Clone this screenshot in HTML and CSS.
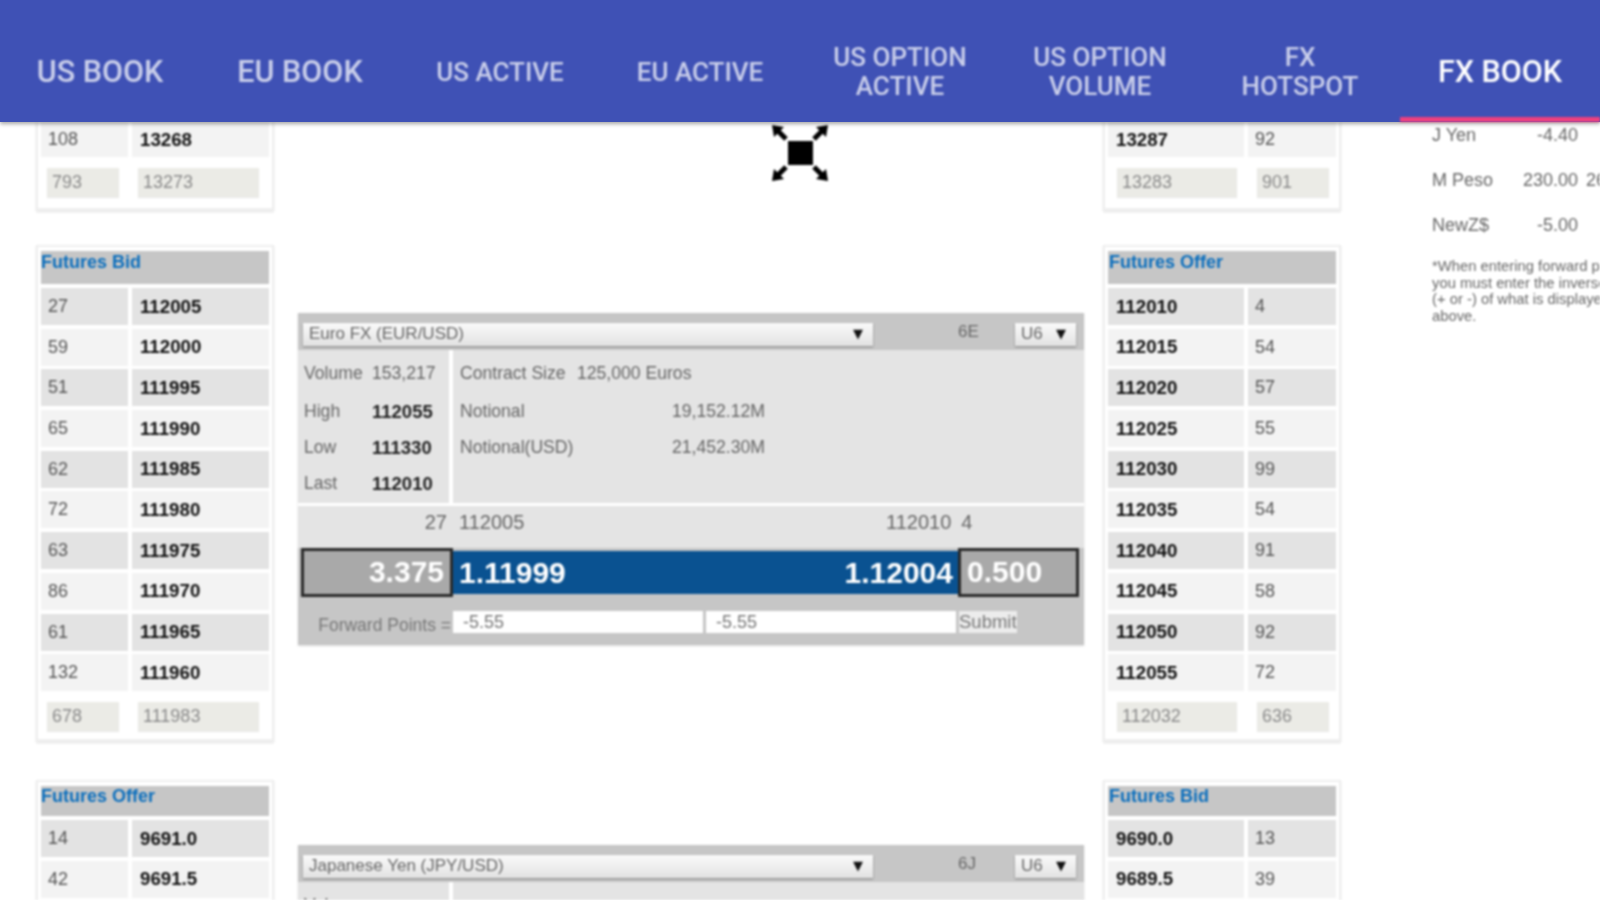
FILE: index.html
```html
<!DOCTYPE html>
<html lang="en">
<head>
<meta charset="utf-8">
<title>FX Book</title>
<link rel="stylesheet" href="styles.css">
</head>
<body>
<header class="tabs">
  <div class="tab">US BOOK</div>
  <div class="tab">EU BOOK</div>
  <div class="tab small mid">US ACTIVE</div>
  <div class="tab small mid">EU ACTIVE</div>
  <div class="tab small">US OPTION<br>ACTIVE</div>
  <div class="tab small">US OPTION<br>VOLUME</div>
  <div class="tab small">FX<br>HOTSPOT</div>
  <div class="tab active">FX BOOK</div>
</header>
<main class="page">
  <svg class="fullscreen" viewBox="0 0 58 62" aria-hidden="true">
    <rect x="17" y="19" width="25" height="24"/>
    <path d="M1 3 13 5 3 15Z"/>
    <path d="M57 3 45 5 55 15Z"/>
    <path d="M1 59 13 57 3 47Z"/>
    <path d="M57 59 45 57 55 47Z"/>
    <path class="arrow" d="M7 9 15 17M51 9 43 17M7 53 15 45M51 53 43 45"/>
  </svg>
  <section class="col">
    <div class="card first bid">
      <div class="rows">
        <div class="row light"><span>108</span><b>13268</b></div>
      </div>
      <div class="entry"><span>793</span><span>13273</span></div>
    </div>
    <div class="card bid">
      <h3>Futures Bid</h3>
      <div class="rows">
        <div class="row"><span>27</span><b>112005</b></div>
        <div class="row light"><span>59</span><b>112000</b></div>
        <div class="row"><span>51</span><b>111995</b></div>
        <div class="row light"><span>65</span><b>111990</b></div>
        <div class="row"><span>62</span><b>111985</b></div>
        <div class="row light"><span>72</span><b>111980</b></div>
        <div class="row"><span>63</span><b>111975</b></div>
        <div class="row light"><span>86</span><b>111970</b></div>
        <div class="row"><span>61</span><b>111965</b></div>
        <div class="row light"><span>132</span><b>111960</b></div>
      </div>
      <div class="entry"><span>678</span><span>111983</span></div>
    </div>
    <div class="card bid lower">
      <h3>Futures Offer</h3>
      <div class="rows">
        <div class="row"><span>14</span><b>9691.0</b></div>
        <div class="row light"><span>42</span><b>9691.5</b></div>
      </div>
    </div>
  </section>

  <section class="center">
    <div class="panel">
      <div class="panel-top">
        <div class="select wide">Euro FX (EUR/USD)<i>▼</i></div>
        <span class="symbol">6E</span>
        <div class="select month">U6<i>▼</i></div>
      </div>
      <div class="info">
        <div class="stats">
          <div class="stat"><span>Volume</span><span>153,217</span></div>
          <div class="stat"><span>High</span><b>112055</b></div>
          <div class="stat"><span>Low</span><b>111330</b></div>
          <div class="stat"><span>Last</span><b>112010</b></div>
        </div>
        <div class="contract">
          <div class="stat contract-size"><span>Contract Size</span><span>125,000 Euros</span></div>
          <div class="stat"><span>Notional</span><span>19,152.12M</span></div>
          <div class="stat"><span>Notional(USD)</span><span>21,452.30M</span></div>
        </div>
      </div>
      <div class="quote">
        <span class="q-size">27</span><span>112005</span><span class="q-offer">112010</span><span class="q-offer-size">4</span>
      </div>
      <div class="prices">
        <div class="box left">3.375</div>
        <div class="rate"><span>1.11999</span><span>1.12004</span></div>
        <div class="box">0.500</div>
      </div>
      <div class="forward">
        <span class="f-label">Forward Points =</span>
        <div class="f-input">-5.55</div>
        <div class="f-input">-5.55</div>
        <div class="f-submit">Submit</div>
      </div>
    </div>
    <div class="panel">
      <div class="panel-top">
        <div class="select wide">Japanese Yen (JPY/USD)<i>▼</i></div>
        <span class="symbol">6J</span>
        <div class="select month">U6<i>▼</i></div>
      </div>
      <div class="info">
        <div class="stats">
          <div class="stat"><span>Volume</span></div>
        </div>
        <div class="contract"></div>
      </div>
    </div>
  </section>

  <section class="col">
    <div class="card first offer">
      <div class="rows">
        <div class="row light"><b>13287</b><span>92</span></div>
      </div>
      <div class="entry"><span>13283</span><span>901</span></div>
    </div>
    <div class="card offer">
      <h3>Futures Offer</h3>
      <div class="rows">
        <div class="row"><b>112010</b><span>4</span></div>
        <div class="row light"><b>112015</b><span>54</span></div>
        <div class="row"><b>112020</b><span>57</span></div>
        <div class="row light"><b>112025</b><span>55</span></div>
        <div class="row"><b>112030</b><span>99</span></div>
        <div class="row light"><b>112035</b><span>54</span></div>
        <div class="row"><b>112040</b><span>91</span></div>
        <div class="row light"><b>112045</b><span>58</span></div>
        <div class="row"><b>112050</b><span>92</span></div>
        <div class="row light"><b>112055</b><span>72</span></div>
      </div>
      <div class="entry"><span>112032</span><span>636</span></div>
    </div>
    <div class="card offer lower">
      <h3>Futures Bid</h3>
      <div class="rows">
        <div class="row"><b>9690.0</b><span>13</span></div>
        <div class="row light"><b>9689.5</b><span>39</span></div>
      </div>
    </div>
  </section>

  <aside class="side">
    <div class="fx"><span>J Yen</span><span class="num">-4.40</span><span class="num">-4.40</span></div>
    <div class="fx"><span>M Peso</span><span class="num">230.00</span><span class="num">260.00</span></div>
    <div class="fx"><span>NewZ$</span><span class="num">-5.00</span><span class="num">-5.00</span></div>
    <p class="note">*When entering forward points<br>you must enter the inverse<br>(+ or -) of what is displayed<br>above.</p>
  </aside>
</main>
</body>
</html>
```
FILE: styles.css
```css
* { box-sizing: border-box; }
html, body { margin: 0; height: 900px; overflow: hidden; background: #fff; }
body { font-family: "Liberation Sans", Arial, sans-serif; color: #555; }

.tabs {
  position: relative;
  z-index: 2;
  display: grid;
  grid-template-columns: repeat(8, 200px);
  height: 122px;
  background: #3f51b5;
  box-shadow: 0 2px 4px rgba(0, 0, 0, .35);
}
.tab {
  display: flex;
  align-items: center;
  justify-content: center;
  padding-top: 21px;
  font: 500 30.5px/29px Roboto, sans-serif;
  color: rgba(255, 255, 255, .72);
  text-align: center;
  filter: blur(.8px);
}
.tab.small { font-size: 26px; }
.tab.mid { padding-top: 23px; }
.tab.active { color: #fff; box-shadow: inset 0 -5px 0 #f0407f; }

.page {
  position: relative;
  display: flex;
  height: 778px;
  padding-left: 36px;
  overflow: hidden;
  font-size: 18px;
  filter: blur(.9px);
}
.fullscreen { position: absolute; left: 771px; top: 0; width: 58px; height: 62px; }
.arrow { fill: none; stroke: #000; stroke-width: 5; }

.col { display: flex; flex: 0 0 238px; flex-direction: column; gap: 34px; }

.card {
  padding: 4px 3px 3px;
  background: #fff;
  border: 2px solid #efefef;
  border-bottom-width: 3px;
  box-shadow: 0 1px 2px rgba(0, 0, 0, .12);
}
.card.first { padding-top: 0; border-top: 0; }
.card.lower { margin-top: 4px; }
.card h3 {
  height: 33px;
  margin: 0 0 4px;
  background: #c6c6c6;
  color: #0a6ebd;
  font-size: 18px;
  font-weight: 700;
  line-height: 23px;
}
.card.lower h3 { height: 30px; line-height: 21px; }
.offer h3 { padding-left: 1px; }
.rows { display: grid; gap: 3.7px; }
.row { display: grid; height: 37px; column-gap: 4px; align-items: stretch; }
.first .row { height: 35px; }
.bid .row { grid-template-columns: 87px 137px; }
.offer .row { grid-template-columns: 136px 88px; }
.row > * {
  display: flex;
  align-items: center;
  padding-left: 7px;
  background: #e3e3e3;
  font-weight: 400;
}
.row b { padding-left: 8px; font-size: 18.7px; font-weight: 700; color: #111; }
.row.light > * { background: #f3f3f3; }

.entry { display: grid; height: 29px; margin: 11px 0 5px; }
.first .entry { margin-bottom: 8px; }
.bid .entry { grid-template-columns: 72px 121px; column-gap: 19px; padding-left: 6px; }
.offer .entry { grid-template-columns: 120px 72px; column-gap: 20px; padding-left: 9px; }
.entry span {
  padding-left: 5px;
  background: #ebebe6;
  color: #8a8a8a;
  line-height: 29px;
  box-shadow: 0 1px 1px rgba(0, 0, 0, .08);
}

.center { display: flex; flex: 0 0 786px; flex-direction: column; gap: 200px; margin: 191px 19px 0 24px; }
.panel { flex: none; background: #c6c6c6; box-shadow: 0 1px 2px rgba(0, 0, 0, .15); }
.panel-top { display: flex; align-items: flex-start; height: 37px; padding: 10px 7px 0 5px; }
.select {
  display: flex;
  align-items: center;
  justify-content: space-between;
  height: 23px;
  padding: 0 10px 2px 6px;
  background: linear-gradient(#fafafa, #e2e2e2);
  box-shadow: 0 1px 2px rgba(0, 0, 0, .35);
  color: #666;
  font-size: 17px;
}
.select i { color: #111; font: normal 13px "DejaVu Sans", sans-serif; }
.wide { width: 570px; }
.month { width: 61px; }
.symbol { width: 20px; margin: -1px 37px 0 85px; color: #666; font-size: 17px; white-space: nowrap; }

.info { display: flex; height: 153px; background: #e4e4e4; }
.stats { flex: 0 0 155px; padding: 4px 0 0 6px; border-right: 4px solid #fff; }
.contract { flex: 1; padding: 4px 0 0 7px; }
.stat { display: flex; align-items: center; height: 36px; color: #666; font-size: 17.6px; white-space: nowrap; }
.stat:first-child { height: 39.5px; }
.stat b { color: #222; font-size: 18.5px; }
.stats .stat > :first-child { flex: 0 0 68px; }
.contract .stat > :first-child { flex: 0 0 212px; }
.contract .contract-size > :first-child { flex: 0 0 117px; }

.quote {
  display: flex;
  align-items: center;
  height: 45px;
  padding-bottom: 10px;
  background: #e4e4e4;
  border-top: 3px solid #fff;
  color: #666;
  font-size: 20px;
}
.quote .q-size { flex: 0 0 149px; margin-right: 12px; text-align: right; }
.quote .q-offer { flex: 0 0 110px; margin-left: 317px; margin-right: 10px; text-align: right; }

.prices { display: flex; align-items: center; height: 49px; margin: 0 4px 0 3px; }
.box {
  flex: 0 0 121px;
  height: 49px;
  padding-left: 6px;
  background: #a9a9a9;
  border: 3px solid #2a2a2a;
  color: #fff;
  font-size: 30px;
  font-weight: 700;
  line-height: 42px;
}
.box.left { flex-basis: 152px; padding: 0 6px 0 0; text-align: right; }
.rate {
  display: flex;
  flex: 0 0 505px;
  justify-content: space-between;
  height: 43px;
  padding: 0 5px 0 6px;
  background: #0a5291;
  color: #fff;
  font-size: 30px;
  font-weight: 700;
  line-height: 43px;
}
.forward { display: flex; height: 48px; padding-top: 14px; color: #777; font-size: 18px; line-height: 22px; }
.f-label { flex: 0 0 153px; margin-top: 3px; text-align: right; white-space: nowrap; font-size: 17.5px; }
.f-input { flex: 0 0 250px; height: 22px; margin: 0 3px 0 2px; padding-left: 10px; background: #fff; }
.f-input + .f-input { margin-left: 0; }
.f-submit { flex: 0 0 58px; height: 22px; background: #ececec; font-size: 18.5px; white-space: nowrap; overflow: hidden; }

.side { flex: 0 0 300px; margin: -9px 0 0 91px; color: #666; font-size: 18px; }
.fx { display: grid; grid-template-columns: 90px 56px 63px; height: 45px; align-items: center; }
.num { text-align: right; white-space: nowrap; }
.note { margin: 10px 0 0; font-size: 14.8px; line-height: 16.5px; white-space: nowrap; }
```
